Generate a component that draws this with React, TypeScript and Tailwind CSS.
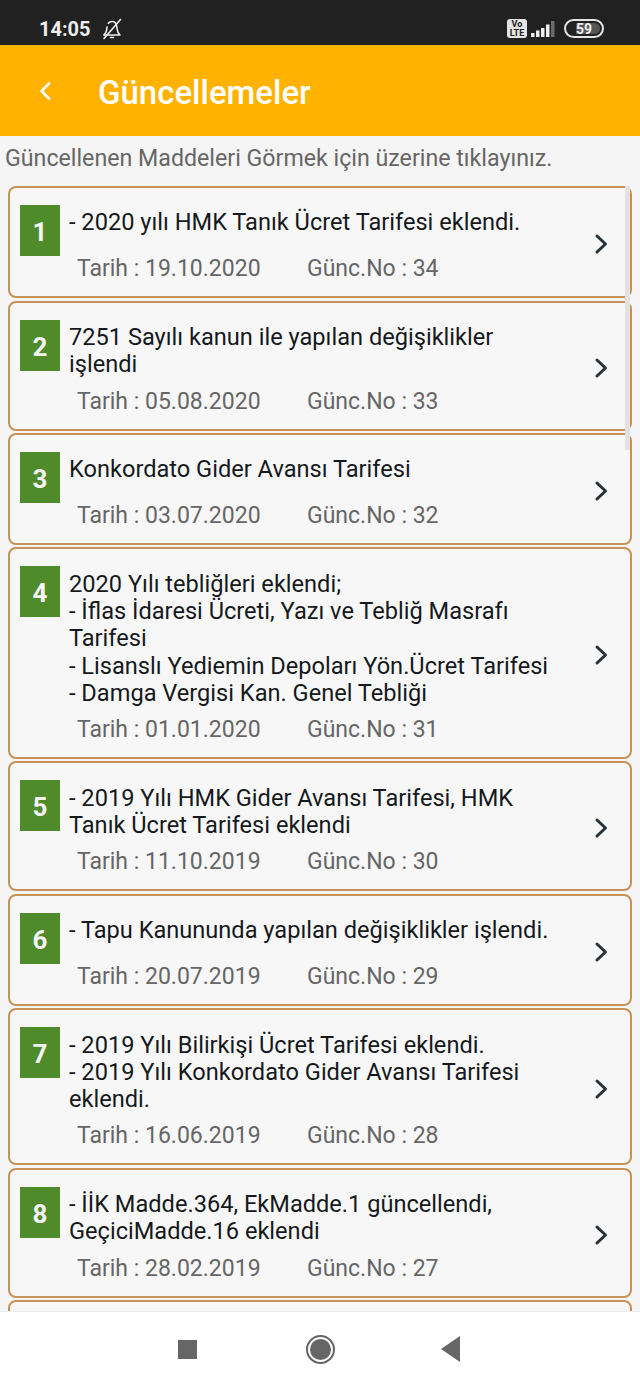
const updates = [
  { no: 1, lines: ['- 2020 yılı HMK Tanık Ücret Tarifesi eklendi.'], date: '19.10.2020', rev: 34 },
  { no: 2, lines: ['7251 Sayılı kanun ile yapılan değişiklikler', 'işlendi'], date: '05.08.2020', rev: 33 },
  { no: 3, lines: ['Konkordato Gider Avansı Tarifesi'], date: '03.07.2020', rev: 32 },
  {
    no: 4,
    lines: [
      '2020 Yılı tebliğleri eklendi;',
      '- İflas İdaresi Ücreti, Yazı ve Tebliğ Masrafı',
      'Tarifesi',
      '- Lisanslı Yediemin Depoları Yön.Ücret Tarifesi',
      '- Damga Vergisi Kan. Genel Tebliği',
    ],
    date: '01.01.2020',
    rev: 31,
  },
  { no: 5, lines: ['- 2019 Yılı HMK Gider Avansı Tarifesi, HMK', 'Tanık Ücret Tarifesi eklendi'], date: '11.10.2019', rev: 30 },
  { no: 6, lines: ['- Tapu Kanununda yapılan değişiklikler işlendi.'], date: '20.07.2019', rev: 29 },
  {
    no: 7,
    lines: ['- 2019 Yılı Bilirkişi Ücret Tarifesi eklendi.', '- 2019 Yılı Konkordato Gider Avansı Tarifesi', 'eklendi.'],
    date: '16.06.2019',
    rev: 28,
  },
  { no: 8, lines: ['- İİK Madde.364, EkMadde.1 güncellendi,', 'GeçiciMadde.16 eklendi'], date: '28.02.2019', rev: 27 },
];

const StatusBar = () => (
  <div className="flex h-[45px] shrink-0 items-center justify-between bg-[#212121] pl-[39px] pr-[36px] pt-[12px] text-[#eeeeee]">
    <div className="flex items-center gap-[10px]">
      <span className="text-[20px] font-bold leading-none">14:05</span>
      <svg width="22" height="22" viewBox="0 0 22 22" fill="none" stroke="#eeeeee" strokeWidth="1.6" strokeLinejoin="round" strokeLinecap="round">
        <path d="M3 17h16c-1.600-1.600-2.600-3-2.800-5.500l-.4-3C15.400 5.500 13.500 3.500 11 3.500c-1.500 0-2.800.7-3.700 1.800" />
        <path d="M6 9l-.3 2.500C5.500 14 4.600 15.400 3 17" />
        <path d="M9.500 19.500h3" />
        <path d="M3 20.500L19.500 1.500" />
      </svg>
    </div>
    <div className="flex items-center">
      <div className="flex h-[19px] w-[20px] flex-col items-center justify-center rounded-[3px] bg-[#e4e4e4] text-[9px] font-bold leading-[9px] text-[#212121]">
        <span>Vo</span>
        <span>LTE</span>
      </div>
      <svg width="24" height="18" viewBox="0 0 24 18" fill="#eeeeee" className="ml-[4px]">
        <path d="M0 13h3.500v4H0zM5 10.500h3.500V17H5zM10 8h3.500v9H10zM15 4.500h3.500V17H15z" />
        <path d="M20 1h3.500v16H20z" fill="#6b6b6b" />
      </svg>
      <div className="relative ml-[9px] flex h-[19px] w-[40px] items-center justify-center overflow-hidden rounded-full border-2 border-[#e4e4e4]">
        <div className="absolute inset-y-[2px] left-[10px] right-[2px] rounded-r-full bg-[#555555]" />
        <span className="relative text-[14px] font-bold leading-none text-[#f0f0f0]">59</span>
      </div>
    </div>
  </div>
);

const Header = () => (
  <div className="flex h-[91px] shrink-0 items-center bg-[#ffb300] pl-[38px] text-white">
    <svg width="14" height="20" viewBox="0 0 14 20" fill="none" stroke="white" strokeWidth="2.600" strokeLinecap="round" strokeLinejoin="round">
      <path d="M11 2.500L3.500 10l7.500 7.500" />
    </svg>
    <h1 className="ml-[46px] pt-[4px] text-[33px] font-medium leading-none">Güncellemeler</h1>
  </div>
);

const UpdateCard = ({ item }: { item: (typeof updates)[number] }) => (
  <div className="flex items-center rounded-[8px] border-2 border-[#c79259] bg-[#f7f7f7] pl-[10px] pr-[20px]">
    <div className="flex min-w-0 flex-1 items-start gap-[9px] pb-[14px] pt-[17px]">
      <div className="flex h-[51px] w-[40px] shrink-0 items-center justify-center bg-[#4f8a2b] pt-[3px] text-[26px] font-bold leading-none text-[#f4f4f4]">
        {item.no}
      </div>
      <div className="min-w-0 flex-1 pt-[4.400px]">
        <div className="min-h-[37px] text-[23.600px] leading-[27.300px] text-[#15191c]">
          {item.lines.map((line) => (
            <div key={line} className="whitespace-nowrap">{line}</div>
          ))}
        </div>
        <div className="mt-[9px] flex pl-[8px] text-[23px] leading-[27px] text-[#666666]">
          <span className="w-[230px]">Tarih : {item.date}</span>
          <span>Günc.No : {item.rev}</span>
        </div>
      </div>
    </div>
    <svg width="16" height="22" viewBox="0 0 16 22" fill="none" stroke="#263238" strokeWidth="3" strokeLinecap="round" strokeLinejoin="round" className="mt-[4px] shrink-0">
      <path d="M3 3l8.500 8L3 19" />
    </svg>
  </div>
);

const NavBar = () => (
  <div className="flex h-[77px] shrink-0 items-center justify-center border-t border-[#ececec] bg-white pb-[2px] pr-[2px]">
    <div className="ml-[1px] h-[19px] w-[19px] bg-[#666666]" />
    <div className="ml-[109px] flex h-[29px] w-[29px] items-center justify-center rounded-full border-2 border-[#666666] bg-white">
      <div className="h-[21px] w-[21px] rounded-full bg-[#666666]" />
    </div>
    <svg width="20" height="26" viewBox="0 0 20 26" fill="#666666" className="ml-[106px]">
      <path d="M19 0v26L0 13z" />
    </svg>
  </div>
);

export default function App() {
  return (
    <div className="flex h-[1388px] w-[640px] flex-col overflow-hidden bg-[#f5f5f5] font-['Roboto',sans-serif]">
      <StatusBar />
      <Header />
      <main className="relative min-h-0 flex-1 overflow-hidden">
        <p className="pl-[5px] pt-[9px] text-[23.200px] leading-[27px] text-[#666666]">
          Güncellenen Maddeleri Görmek için üzerine tıklayınız.
        </p>
        <div className="mt-[14px] flex flex-col gap-[2.200px] px-[8px]">
          {updates.map((item) => (
            <UpdateCard key={item.no} item={item} />
          ))}
          <div className="h-[40px] rounded-[8px] border-2 border-[#c79259] bg-[#f7f7f7]" />
        </div>
        <div className="absolute right-[10px] top-[50px] h-[264px] w-[5px] bg-[#e2e2e2]" />
      </main>
      <NavBar />
    </div>
  );
}
